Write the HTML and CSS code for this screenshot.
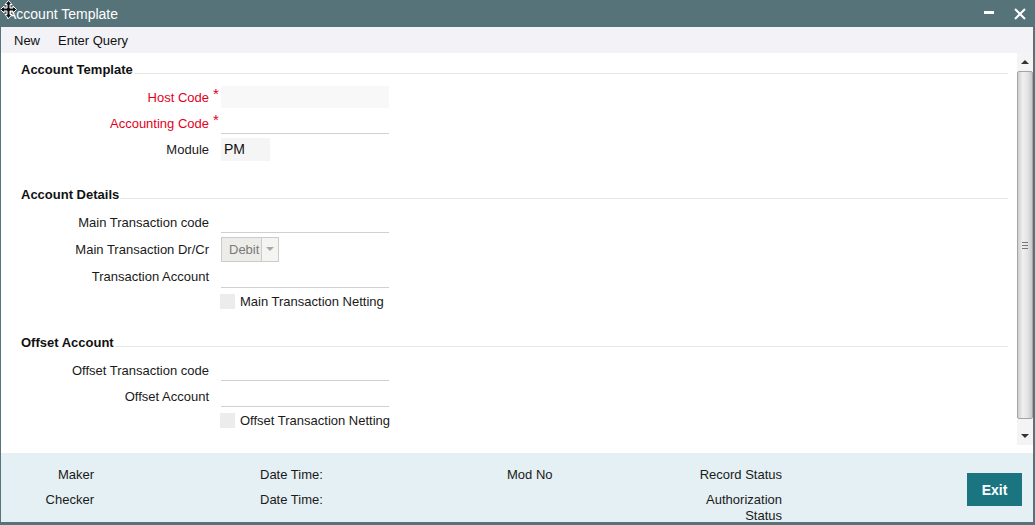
FILE: index.html
```html
<!DOCTYPE html>
<html lang="en">
<head>
  <meta charset="UTF-8" />
  <title>Account Template</title>
  <link rel="stylesheet" href="styles.css">
</head>
<body>
  <div class="window">
    <div class="titlebar">
      <svg class="cursor" width="17" height="19" viewBox="0 0 17 19">
        <path d="M8.5 0.5 L12 4.5 H10 V8 H13 V6 L16.5 9.5 L13 13 V11 H10 V14.5 H12 L8.5 18.5 L5 14.5 H7 V11 H4 V13 L0.5 9.5 L4 6 V8 H7 V4.5 H5 Z" fill="#111" stroke="#fff" stroke-width="1"/>
      </svg>
      <span class="title">Account Template</span>
      <div class="win-btns">
        <svg width="10" height="4" viewBox="0 0 10 4"><rect x="0" y="0" width="10" height="3" fill="#fff"/></svg>
        <svg width="12" height="12" viewBox="0 0 12 12"><path d="M1 1 L11 11 M11 1 L1 11" stroke="#fff" stroke-width="2"/></svg>
      </div>
    </div>

    <div class="toolbar">
      <span>New</span>
      <span>Enter Query</span>
    </div>

    <div class="main">
      <div class="content">
        <div class="section-head">Account Template</div>
        <div class="rows">
          <div class="row">
            <label class="lbl req">Host Code</label><span class="mark">*</span>
            <span class="field field-grey"></span>
          </div>
          <div class="row">
            <label class="lbl req">Accounting Code</label><span class="mark">*</span>
            <span class="field field-line"></span>
          </div>
          <div class="row">
            <label class="lbl">Module</label><span class="mark"></span>
            <span class="field field-short">PM</span>
          </div>
        </div>

        <div class="section-head gap-22">Account Details</div>
        <div class="rows">
          <div class="row">
            <label class="lbl">Main Transaction code</label><span class="mark"></span>
            <span class="field field-line"></span>
          </div>
          <div class="row row-28">
            <label class="lbl">Main Transaction Dr/Cr</label><span class="mark"></span>
            <span class="select"><span class="select-val">Debit</span><span class="select-arrow"></span></span>
          </div>
          <div class="row row-27">
            <label class="lbl">Transaction Account</label><span class="mark"></span>
            <span class="field field-line"></span>
          </div>
          <div class="row row-check">
            <span class="box"></span>Main Transaction Netting
          </div>
        </div>

        <div class="section-head gap-20">Offset Account</div>
        <div class="rows">
          <div class="row">
            <label class="lbl">Offset Transaction code</label><span class="mark"></span>
            <span class="field field-line"></span>
          </div>
          <div class="row">
            <label class="lbl">Offset Account</label><span class="mark"></span>
            <span class="field field-line"></span>
          </div>
          <div class="row row-check">
            <span class="box"></span>Offset Transaction Netting
          </div>
        </div>
      </div>

      <div class="scrollbar">
        <div class="sb-btn sb-up"></div>
        <div class="sb-thumb"><span class="grip"></span></div>
        <div class="sb-btn sb-down"></div>
      </div>
    </div>

    <div class="footer">
      <div class="fcol f-maker">
        <span>Maker</span>
        <span>Checker</span>
      </div>
      <div class="fcol f-date">
        <span>Date Time:</span>
        <span>Date Time:</span>
      </div>
      <div class="fcol f-mod">
        <span>Mod No</span>
      </div>
      <div class="fcol f-status">
        <span>Record Status</span>
        <span>Authorization Status</span>
      </div>
      <button class="exit">Exit</button>
    </div>
  </div>
</body>
</html>
```

FILE: styles.css
```css
body {
  margin: 0;
  font-family: 'Liberation Sans', Arial, sans-serif;
  font-size: 13px;
  color: #1a1a1a;
  background: #fff;
}
.window {
  width: 1035px;
  height: 525px;
  box-sizing: border-box;
  border: solid #56737a;
  border-width: 0 2px 3px 1px;
  display: flex;
  flex-direction: column;
  position: relative;
  overflow: hidden;
}
.titlebar {
  height: 27px;
  flex: none;
  background: #56737a;
  color: #fff;
  display: flex;
  align-items: center;
  padding-left: 6px;
  font-size: 14px;
}
.cursor {
  position: absolute;
  left: -1px;
  top: 0;
}
.win-btns {
  margin-left: auto;
  margin-right: 7px;
  display: flex;
  align-items: center;
  gap: 20px;
}
.win-btns svg:first-child {
  margin-top: -2px;
}
.toolbar {
  height: 26px;
  flex: none;
  background: #f2f2f7;
  display: flex;
  align-items: center;
  gap: 18px;
  padding-left: 13px;
  color: #111;
}
.main {
  height: 400px;
  flex: none;
  display: flex;
}
.content {
  flex: 1;
  padding: 6px 9px 0 20px;
}
.section-head {
  height: 20px;
  display: flex;
  align-items: center;
  font-weight: bold;
  color: #111;
}
.section-head::after {
  content: "";
  flex: 1;
  height: 1px;
  background: #e8e8e8;
  margin-top: 8px;
  margin-left: 1px;
}
.gap-22 { margin-top: 22px; }
.gap-20 { margin-top: 20px; }
.rows {
  margin-top: 5px;
}
.row {
  height: 26px;
  display: flex;
  align-items: center;
}
.row-28 { height: 28px; }
.row-27 { height: 27px; }
.lbl {
  width: 188px;
  text-align: right;
  color: #1a1a1a;
}
.lbl.req {
  color: #e3001b;
}
.mark {
  width: 12px;
  box-sizing: border-box;
  padding-left: 4px;
  color: #e3001b;
  font-size: 15px;
  margin-bottom: 7px;
}
.field {
  width: 168px;
  height: 22px;
  box-sizing: border-box;
  display: flex;
  align-items: center;
  padding-left: 3px;
}
.field-grey {
  background: #f8f8f8;
}
.field-line {
  border-bottom: 1px solid #d0d0d0;
}
.field-short {
  width: 49px;
  height: 23px;
  background: #f5f5f5;
  font-size: 14px;
  color: #111;
}
.select {
  display: flex;
  height: 25px;
}
.select-val {
  width: 41px;
  box-sizing: border-box;
  border: 1px solid #cbcbcb;
  background: #ecece8;
  color: #7a7a7a;
  font-size: 13px;
  display: flex;
  align-items: center;
  padding-left: 7px;
  white-space: nowrap;
}
.select-arrow {
  width: 17px;
  box-sizing: border-box;
  border: 1px solid #cbcbcb;
  border-left: none;
  background: #f4f4f2;
  display: flex;
  align-items: center;
  justify-content: center;
}
.select-arrow::before {
  content: "";
  border: 4px solid transparent;
  border-top: 4px solid #a8a8a8;
  margin-top: 4px;
}
.row-check {
  height: 22px;
  padding-left: 199px;
  gap: 5px;
  color: #1a1a1a;
}
.box {
  width: 15px;
  height: 15px;
  background: #ececec;
}
.scrollbar {
  width: 16px;
  height: 392px;
  display: flex;
  flex-direction: column;
  background: #f4f4f4;
}
.sb-btn {
  display: flex;
  justify-content: center;
}
.sb-up {
  height: 17px;
  align-items: center;
  margin-bottom: 1px;
}
.sb-up::before {
  content: "";
  border: 4px solid transparent;
  border-bottom: 4px solid #333;
  margin-top: -4px;
}
.sb-down {
  height: 26px;
  align-items: flex-end;
  padding-bottom: 7px;
  box-sizing: border-box;
}
.sb-down::before {
  content: "";
  border: 4px solid transparent;
  border-top: 4px solid #333;
  margin-bottom: -4px;
}
.sb-thumb {
  flex: 1;
  box-sizing: border-box;
  border: 1px solid #a4a4a4;
  border-radius: 2px;
  background: linear-gradient(to right, #cfcfcf, #f0f0f0 35%, #e2e2e2 70%, #c8c8c8);
  display: flex;
  align-items: center;
  justify-content: center;
}
.grip {
  width: 6px;
  height: 7px;
  border-top: 1px solid #777;
  border-bottom: 1px solid #777;
  box-sizing: border-box;
  background: linear-gradient(#777, #777) center / 6px 1px no-repeat;
}
.footer {
  height: 69px;
  flex: none;
  box-sizing: border-box;
  background: #e4f0f3;
  display: flex;
  align-items: flex-start;
  padding-top: 14px;
  color: #1a1a1a;
}
.fcol {
  display: flex;
  flex-direction: column;
  gap: 9px;
  line-height: 16px;
}
.f-maker {
  width: 93px;
  text-align: right;
}
.f-date {
  margin-left: 166px;
  width: 247px;
}
.f-mod {
  width: 191px;
}
.f-status {
  width: 84px;
  text-align: right;
}
.exit {
  margin-left: auto;
  margin-right: 11px;
  margin-top: 6px;
  width: 55px;
  height: 33px;
  border: none;
  background: #1a7580;
  color: #fff;
  font-family: 'Liberation Sans', Arial, sans-serif;
  font-weight: bold;
  font-size: 14px;
  cursor: pointer;
}
```
